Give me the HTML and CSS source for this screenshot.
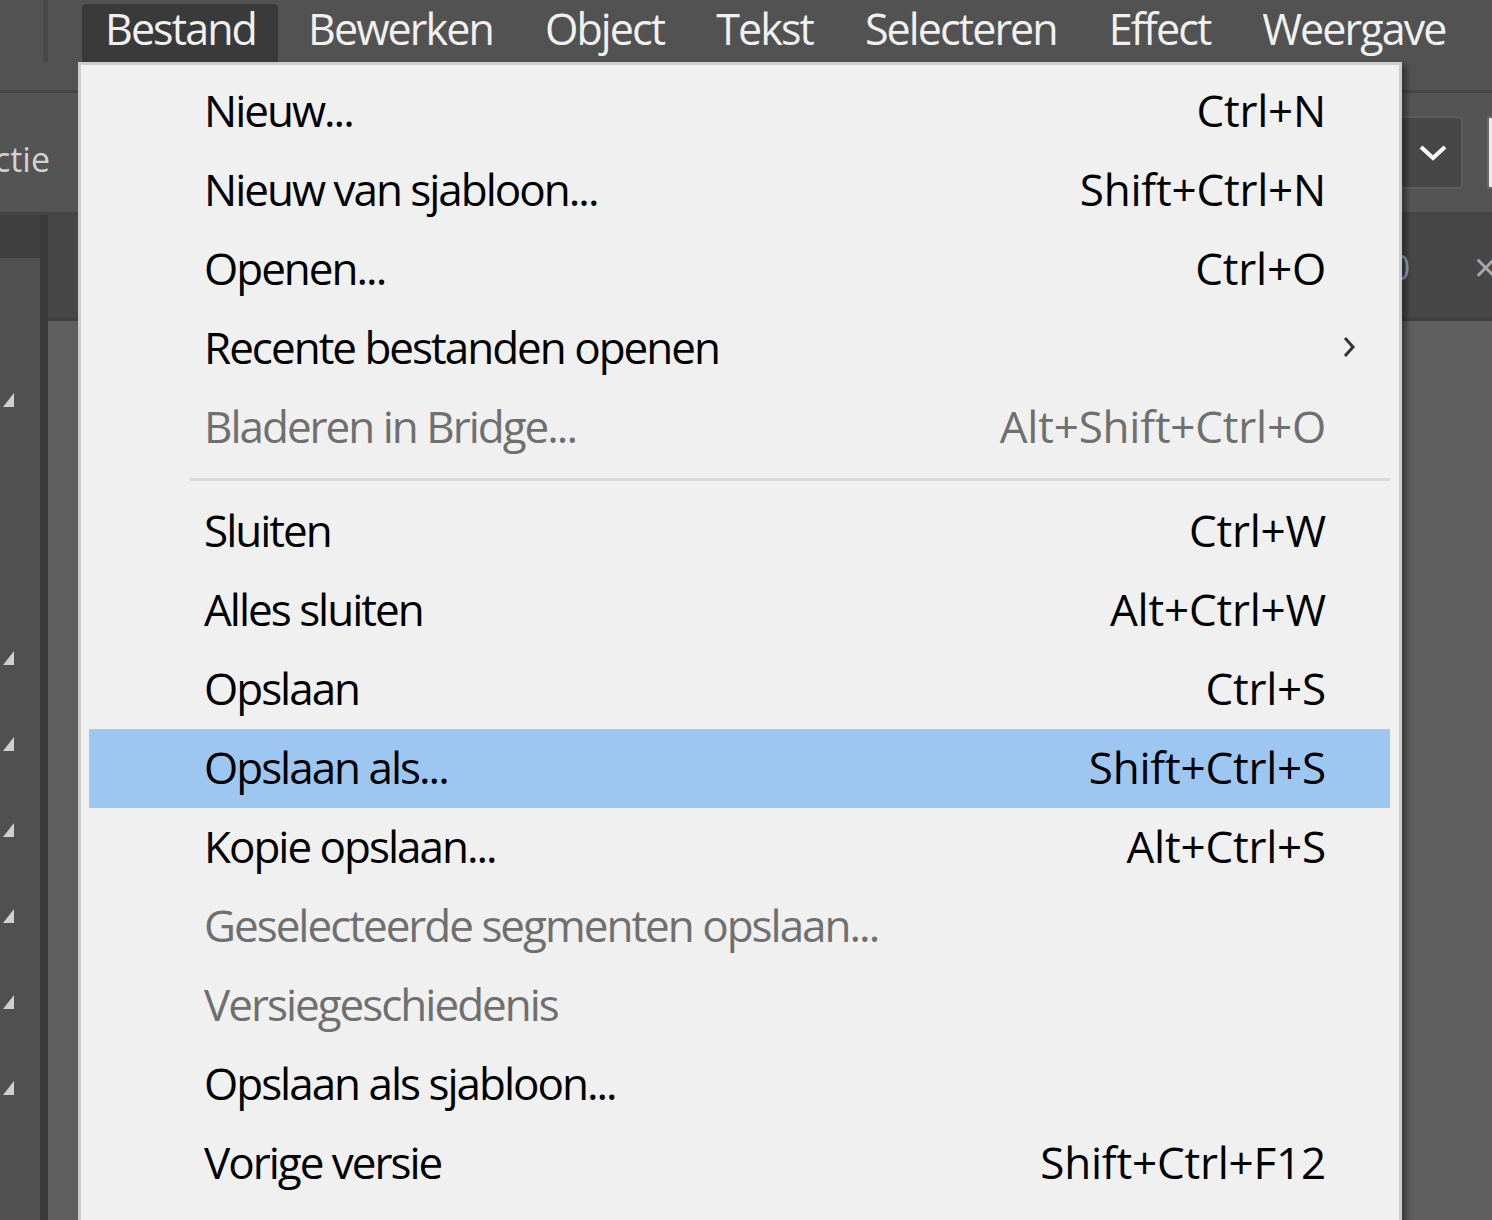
FILE: index.html
```html
<!DOCTYPE html>
<html lang="nl">
<head>
<meta charset="utf-8">
<title>Bestand menu</title>
<link rel="stylesheet" href="styles.css">
</head>
<body>
<div class="app">
  <div class="menubar">
    <div class="mb-left"><div class="mb-grip"></div></div>
    <div class="mb-items">
      <div class="mb-item active">Bestand</div>
      <div class="mb-item">Bewerken</div>
      <div class="mb-item">Object</div>
      <div class="mb-item">Tekst</div>
      <div class="mb-item">Selecteren</div>
      <div class="mb-item">Effect</div>
      <div class="mb-item">Weergave</div>
    </div>
  </div>
  <div class="controlbar">
    <div class="cb-label"><span>Selectie</span></div>
    <div class="cb-spacer"></div>
    <div class="cb-dropdown">
      <svg class="chev" width="30" height="18" viewBox="0 0 30 18"><polyline points="3,3 15,14 27,3" fill="none" stroke="#ffffff" stroke-width="4"/></svg>
    </div>
    <div class="cb-field"></div>
  </div>
  <div class="main">
    <div class="toolcol">
      <div class="tool-head"></div>
      <div class="toolbar">
        <div class="slot"><svg class="tri" width="11" height="14" viewBox="0 0 11 14"><polygon points="11,0 11,14 0,14" fill="#cfcfcf"/></svg></div>
        <div class="slot"></div>
        <div class="slot"></div>
        <div class="slot"><svg class="tri" width="11" height="14" viewBox="0 0 11 14"><polygon points="11,0 11,14 0,14" fill="#cfcfcf"/></svg></div>
        <div class="slot"><svg class="tri" width="11" height="14" viewBox="0 0 11 14"><polygon points="11,0 11,14 0,14" fill="#cfcfcf"/></svg></div>
        <div class="slot"><svg class="tri" width="11" height="14" viewBox="0 0 11 14"><polygon points="11,0 11,14 0,14" fill="#cfcfcf"/></svg></div>
        <div class="slot"><svg class="tri" width="11" height="14" viewBox="0 0 11 14"><polygon points="11,0 11,14 0,14" fill="#cfcfcf"/></svg></div>
        <div class="slot"><svg class="tri" width="11" height="14" viewBox="0 0 11 14"><polygon points="11,0 11,14 0,14" fill="#cfcfcf"/></svg></div>
        <div class="slot"><svg class="tri" width="11" height="14" viewBox="0 0 11 14"><polygon points="11,0 11,14 0,14" fill="#cfcfcf"/></svg></div>
      </div>
    </div>
    <div class="divider"></div>
    <div class="docarea">
      <div class="tabbar">
        <span class="tab-title">0</span>
        <span class="tab-close">×</span>
      </div>
      <div class="canvas"></div>
    </div>
  </div>

  <div class="menu">
    <div class="row"><span></span><span class="label">Nieuw...</span><span class="key">Ctrl+N</span><span></span></div>
    <div class="row"><span></span><span class="label">Nieuw van sjabloon...</span><span class="key">Shift+Ctrl+N</span><span></span></div>
    <div class="row"><span></span><span class="label">Openen...</span><span class="key">Ctrl+O</span><span></span></div>
    <div class="row"><span></span><span class="label">Recente bestanden openen</span><span class="key"></span><span class="sub"><svg width="14" height="24" viewBox="0 0 14 24"><polyline points="3,3 11,12 3,21" fill="none" stroke="#333333" stroke-width="3"/></svg></span></div>
    <div class="row disabled"><span></span><span class="label">Bladeren in Bridge...</span><span class="key">Alt+Shift+Ctrl+O</span><span></span></div>
    <div class="sep"><div class="sep-line"></div></div>
    <div class="row"><span></span><span class="label">Sluiten</span><span class="key">Ctrl+W</span><span></span></div>
    <div class="row"><span></span><span class="label">Alles sluiten</span><span class="key">Alt+Ctrl+W</span><span></span></div>
    <div class="row"><span></span><span class="label">Opslaan</span><span class="key">Ctrl+S</span><span></span></div>
    <div class="row hover"><span></span><span class="label">Opslaan als...</span><span class="key">Shift+Ctrl+S</span><span></span></div>
    <div class="row"><span></span><span class="label">Kopie opslaan...</span><span class="key">Alt+Ctrl+S</span><span></span></div>
    <div class="row disabled"><span></span><span class="label">Geselecteerde segmenten opslaan...</span><span class="key"></span><span></span></div>
    <div class="row disabled"><span></span><span class="label">Versiegeschiedenis</span><span class="key"></span><span></span></div>
    <div class="row"><span></span><span class="label">Opslaan als sjabloon...</span><span class="key"></span><span></span></div>
    <div class="row"><span></span><span class="label">Vorige versie</span><span class="key">Shift+Ctrl+F12</span><span></span></div>
  </div>
</div>
</body>
</html>
```

FILE: styles.css
```css
html, body {
  margin: 0;
  padding: 0;
  background: #5e5e5e;
}
body {
  font-family: "Open Sans", "Noto Sans", sans-serif;
}
.app {
  position: relative;
  width: 1492px;
  height: 1220px;
  overflow: hidden;
  display: flex;
  flex-direction: column;
}

/* menu bar */
.menubar {
  height: 90px;
  flex-shrink: 0;
  background: #525252;
  border-bottom: 3px solid #454545;
  display: flex;
  align-items: flex-start;
}
.mb-left {
  width: 82px;
  height: 62px;
  flex-shrink: 0;
  display: flex;
  justify-content: flex-end;
  padding-right: 34px;
  box-sizing: border-box;
}
.mb-grip {
  width: 5px;
  height: 62px;
  background: #494949;
}
.mb-items {
  display: flex;
  gap: 7px;
  white-space: nowrap;
}
.mb-item {
  height: 62px;
  box-sizing: border-box;
  border-top: 4px solid transparent;
  background-clip: padding-box;
  padding: 0 22px 8px 23px;
  line-height: 50px;
  font-size: 43px;
  letter-spacing: -1.9px;
  color: #f0f0f0;
}
.mb-item.active {
  background-color: #3a3a3a;
  border-radius: 6px 6px 0 0;
}

/* control bar */
.controlbar {
  height: 119px;
  flex-shrink: 0;
  background: #545454;
  border-bottom: 3px solid #444444;
  display: flex;
  align-items: center;
  overflow: hidden;
}
.cb-label {
  width: 50px;
  flex-shrink: 0;
  display: flex;
  justify-content: flex-end;
  overflow: hidden;
  font-size: 34px;
  color: #d2d2d2;
  white-space: nowrap;
  padding-top: 12px;
}
.cb-spacer {
  flex: 1;
}
.cb-dropdown {
  width: 68px;
  height: 73px;
  flex-shrink: 0;
  box-sizing: border-box;
  border: 2px solid #5d5d5d;
  border-radius: 5px;
  background: #474747;
  display: flex;
  align-items: center;
  justify-content: center;
  margin-right: 24px;
}
.chev {
  margin-left: 8px;
}
.cb-field {
  width: 40px;
  height: 73px;
  flex-shrink: 0;
  box-sizing: border-box;
  border: 2px solid #6a6a6a;
  border-radius: 3px;
  background: #ececec;
  margin-right: -35px;
}

/* workspace */
.main {
  flex: 1;
  display: flex;
  min-height: 0;
}
.toolcol {
  width: 40px;
  flex-shrink: 0;
  display: flex;
  flex-direction: column;
}
.tool-head {
  height: 43px;
  background: #404040;
}
.toolbar {
  flex: 1;
  background: #505050;
  padding-top: 63px;
}
.slot {
  height: 86px;
  display: flex;
  align-items: flex-end;
  padding-left: 3px;
}
.tri {
  display: block;
}
.divider {
  width: 8px;
  flex-shrink: 0;
  background: #3a3a3a;
}
.docarea {
  flex: 1;
  display: flex;
  flex-direction: column;
  min-width: 0;
}
.tabbar {
  height: 103px;
  flex-shrink: 0;
  background: #474747;
  border-bottom: 3px solid #3f3f3f;
  display: flex;
  align-items: center;
  justify-content: flex-end;
  overflow: hidden;
  white-space: nowrap;
}
.tab-title {
  font-size: 34px;
  color: #8fa6c4;
  margin-right: 64px;
}
.tab-close {
  font-size: 40px;
  color: #aaaaaa;
  margin-right: -5px;
}
.canvas {
  flex: 1;
  background: #5e5e5e;
}

/* dropdown menu */
.menu {
  position: absolute;
  left: 78px;
  top: 62px;
  width: 1324px;
  height: 1200px;
  box-sizing: border-box;
  border: 3px solid #cdcdcd;
  background: #f0f0f0;
  padding: 7px 9px 0 8px;
  box-shadow: 5px 4px 5px rgba(0, 0, 0, 0.35);
  font-size: 44px;
  letter-spacing: -2px;
  color: #000000;
  white-space: nowrap;
}
.row {
  display: grid;
  grid-template-columns: 115px 1fr auto 64px;
  height: 79px;
  box-sizing: border-box;
  padding-bottom: 3px;
  line-height: 76px;
}
.row.hover {
  background: #9dc6f1;
}
.row.disabled {
  color: #6f6f6f;
}
.key {
  text-align: right;
  letter-spacing: -0.2px;
}
.sub {
  display: flex;
  align-items: center;
  padding-left: 16px;
}
.sub svg {
  display: block;
}
.sep {
  height: 25px;
  display: flex;
  align-items: center;
  padding-left: 101px;
}
.sep-line {
  flex: 1;
  height: 3px;
  background: #d8d8d8;
}
```
